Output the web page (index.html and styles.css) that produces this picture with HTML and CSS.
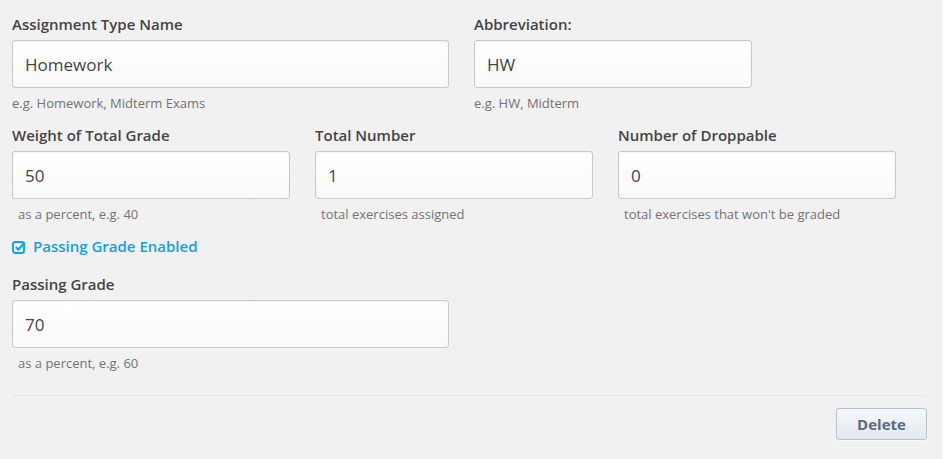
FILE: index.html
```html
<!DOCTYPE html>
<html>
<head>
<meta charset="utf-8">
<link rel="stylesheet" href="styles.css">
</head>
<body>
<div class="panel">
  <div class="row row-top">
    <div class="field">
      <label class="label">Assignment Type Name</label>
      <input class="input" type="text" value="Homework">
      <div class="help">e.g. Homework, Midterm Exams</div>
    </div>
    <div class="field">
      <label class="label">Abbreviation:</label>
      <input class="input" type="text" value="HW">
      <div class="help">e.g. HW, Midterm</div>
    </div>
  </div>
  <div class="row row-mid">
    <div class="field">
      <label class="label">Weight of Total Grade</label>
      <input class="input" type="text" value="50">
      <div class="help indent">as a percent, e.g. 40</div>
    </div>
    <div class="field">
      <label class="label">Total Number</label>
      <input class="input" type="text" value="1">
      <div class="help indent">total exercises assigned</div>
    </div>
    <div class="field">
      <label class="label">Number of Droppable</label>
      <input class="input" type="text" value="0">
      <div class="help indent">total exercises that won't be graded</div>
    </div>
  </div>
  <div class="toggle">
    <svg class="check" width="14" height="14" viewBox="0 0 14 14">
      <rect x="1" y="2" width="11" height="11" rx="2.2" fill="none" stroke="currentColor" stroke-width="1.9"/>
      <path d="M3.8 7 L6.3 9.5 L12.6 2.8" fill="none" stroke="currentColor" stroke-width="2.1"/>
    </svg>
    <span>Passing Grade Enabled</span>
  </div>
  <div class="row row-pass">
    <div class="field">
      <label class="label">Passing Grade</label>
      <input class="input" type="text" value="70">
      <div class="help indent">as a percent, e.g. 60</div>
    </div>
  </div>
  <div class="divider"></div>
  <div class="actions">
    <button class="btn">Delete</button>
  </div>
</div>
</body>
</html>
```

FILE: styles.css
```css
html, body {
  margin: 0;
  padding: 0;
  background: #ffffff;
}
body {
  font-family: "Open Sans", "DejaVu Sans", sans-serif;
  color: #444;
}
.panel {
  width: 942px;
  height: 459px;
  box-sizing: border-box;
  background: #f1f1f1;
  padding: 14px 15px 0 12px;
}
.row {
  display: grid;
  column-gap: 25px;
}
.row-top {
  grid-template-columns: 437px 278px;
}
.row-mid {
  grid-template-columns: 278px 278px 278px;
  margin-top: 14px;
}
.row-pass {
  grid-template-columns: 437px;
  margin-top: 18px;
}
.field {
  display: flex;
  flex-direction: column;
}
.label {
  display: block;
  font-size: 15px;
  font-weight: 600;
  line-height: 20px;
  color: #444;
  margin-bottom: 6px;
}
.input {
  box-sizing: border-box;
  height: 48px;
  width: 100%;
  border: 1px solid #c9c9c9;
  border-radius: 3px;
  background: linear-gradient(#ffffff, #f9f9f9);
  box-shadow: inset 0 1px 2px rgba(0,0,0,0.05);
  padding: 0 12px;
  font-family: "Open Sans", "DejaVu Sans", sans-serif;
  font-size: 17px;
  color: #444;
  outline: none;
}
.help {
  margin-top: 7px;
  font-size: 13px;
  line-height: 16px;
  color: #737373;
}
.help.indent {
  padding-left: 6px;
}
.toggle {
  margin-top: 14px;
  display: flex;
  align-items: center;
  gap: 7px;
  height: 20px;
  color: #10a2e0;
  font-size: 15px;
  font-weight: 600;
}
.check {
  display: block;
  margin-top: 1px;
}
.divider {
  margin-top: 24px;
  height: 1px;
  background: #e6e6e6;
}
.actions {
  display: flex;
  justify-content: flex-end;
  margin-top: 12px;
}
.btn {
  width: 91px;
  height: 32px;
  border: 1px solid #b8c2cc;
  border-radius: 3px;
  background: linear-gradient(#f6f8fa, #e3e8ee);
  color: #5a6c80;
  font-family: "Open Sans", "DejaVu Sans", sans-serif;
  font-size: 15px;
  font-weight: 700;
  box-shadow: 0 1px 0 rgba(255,255,255,0.6);
  padding: 0;
}
```
